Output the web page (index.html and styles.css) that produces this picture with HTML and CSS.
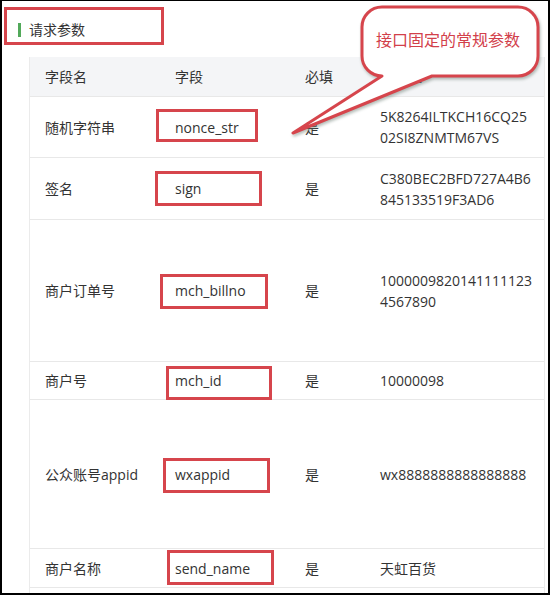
FILE: index.html
```html
<!DOCTYPE html>
<html lang="zh-CN">
<head>
<meta charset="utf-8">
<title>请求参数</title>
<link rel="stylesheet" href="styles.css">
</head>
<body>
<div class="frame">
  <div class="section-title"><span class="bar"></span><span>请求参数</span></div>
  <div class="table">
    <div class="row head r-head">
      <div class="cell">字段名</div>
      <div class="cell">字段</div>
      <div class="cell">必填</div>
      <div class="cell">示例值</div>
    </div>
    <div class="row r1">
      <div class="cell">随机字符串</div>
      <div class="cell">nonce_str</div>
      <div class="cell">是</div>
      <div class="cell">5K8264ILTKCH16CQ25<br>02SI8ZNMTM67VS</div>
    </div>
    <div class="row r2">
      <div class="cell">签名</div>
      <div class="cell">sign</div>
      <div class="cell">是</div>
      <div class="cell">C380BEC2BFD727A4B6<br>845133519F3AD6</div>
    </div>
    <div class="row r3">
      <div class="cell">商户订单号</div>
      <div class="cell">mch_billno</div>
      <div class="cell">是</div>
      <div class="cell">1000009820141111123<br>4567890</div>
    </div>
    <div class="row r4">
      <div class="cell">商户号</div>
      <div class="cell">mch_id</div>
      <div class="cell">是</div>
      <div class="cell">10000098</div>
    </div>
    <div class="row r5">
      <div class="cell">公众账号appid</div>
      <div class="cell">wxappid</div>
      <div class="cell">是</div>
      <div class="cell">wx8888888888888888</div>
    </div>
    <div class="row r6">
      <div class="cell">商户名称</div>
      <div class="cell">send_name</div>
      <div class="cell">是</div>
      <div class="cell">天虹百货</div>
    </div>
  </div>

  <span class="mark m-title"></span>
  <span class="mark m-nonce"></span>
  <span class="mark m-sign"></span>
  <span class="mark m-bill"></span>
  <span class="mark m-mchid"></span>
  <span class="mark m-appid"></span>
  <span class="mark m-send"></span>

  <div class="callout">
    <svg class="callout-shape" width="270" height="145" viewBox="0 0 270 145">
      <path d="M102 76 L13 133 L152 76 H238 A20 20 0 0 0 258 56 V27 A20 20 0 0 0 238 7 H102 A20 20 0 0 0 82 27 V56 A20 20 0 0 0 102 76 Z" fill="#fff" stroke="#d6454c" stroke-width="3" stroke-linejoin="round"/>
    </svg>
    <span class="callout-text">接口固定的常规参数</span>
  </div>
</div>
</body>
</html>
```

FILE: styles.css
```css
html, body {
  margin: 0;
  padding: 0;
  background: #fff;
}

body {
  font-family: "Open Sans", "Noto Sans CJK SC", sans-serif;
  font-size: 14px;
  color: #333;
}

.frame {
  position: relative;
  width: 550px;
  height: 595px;
  box-sizing: border-box;
  border: 2px solid #000;
  border-top-width: 1px;
  overflow: hidden;
  background: #fff;
}

.section-title {
  display: flex;
  align-items: center;
  gap: 8px;
  padding: 19px 0 0 16px;
  line-height: 20px;
  height: 20px;
}

.bar {
  display: block;
  width: 3px;
  height: 14px;
  background: #52a95a;
}

.table {
  margin: 17px 0 0 27px;
  width: 516px;
  box-sizing: border-box;
  border-left: 1px solid #ebebeb;
  border-right: 1px solid #ebebeb;
  min-height: 560px;
}

.row {
  display: grid;
  grid-template-columns: 130px 130px 75px 1fr;
  align-items: center;
  box-sizing: border-box;
  border-bottom: 1px solid #e8e8e8;
  line-height: 21px;
}

.head {
  background: #f4f5f7;
}

.cell {
  padding-left: 15px;
  white-space: nowrap;
}

.r-head { height: 40px; }
.r1 { height: 61px; }
.r2 { height: 62px; }
.r3 { height: 142px; }
.r4 { height: 38px; }
.r5 { height: 149px; }
.r6 { height: 39px; }

.mark {
  position: absolute;
  box-sizing: border-box;
  border: 3px solid #d6454c;
}

.m-title { left: 2px;   top: 6px;   width: 160px; height: 38px; }
.m-nonce { left: 154px; top: 108px; width: 102px; height: 33px; }
.m-sign  { left: 153px; top: 170px; width: 107px; height: 35px; }
.m-bill  { left: 158px; top: 273px; width: 108px; height: 35px; }
.m-mchid { left: 164px; top: 365px; width: 106px; height: 34px; }
.m-appid { left: 161px; top: 457px; width: 107px; height: 35px; }
.m-send  { left: 165px; top: 549px; width: 107px; height: 35px; }

.callout {
  position: absolute;
  left: 278px;
  top: -1px;
  width: 270px;
  height: 145px;
}

.callout-shape {
  display: block;
  filter: drop-shadow(1px 2px 1.5px rgba(90, 110, 100, 0.45));
}

.callout-text {
  position: absolute;
  left: 96px;
  top: 29px;
  font-size: 16px;
  line-height: 22px;
  color: #d2404a;
  white-space: nowrap;
}
```
